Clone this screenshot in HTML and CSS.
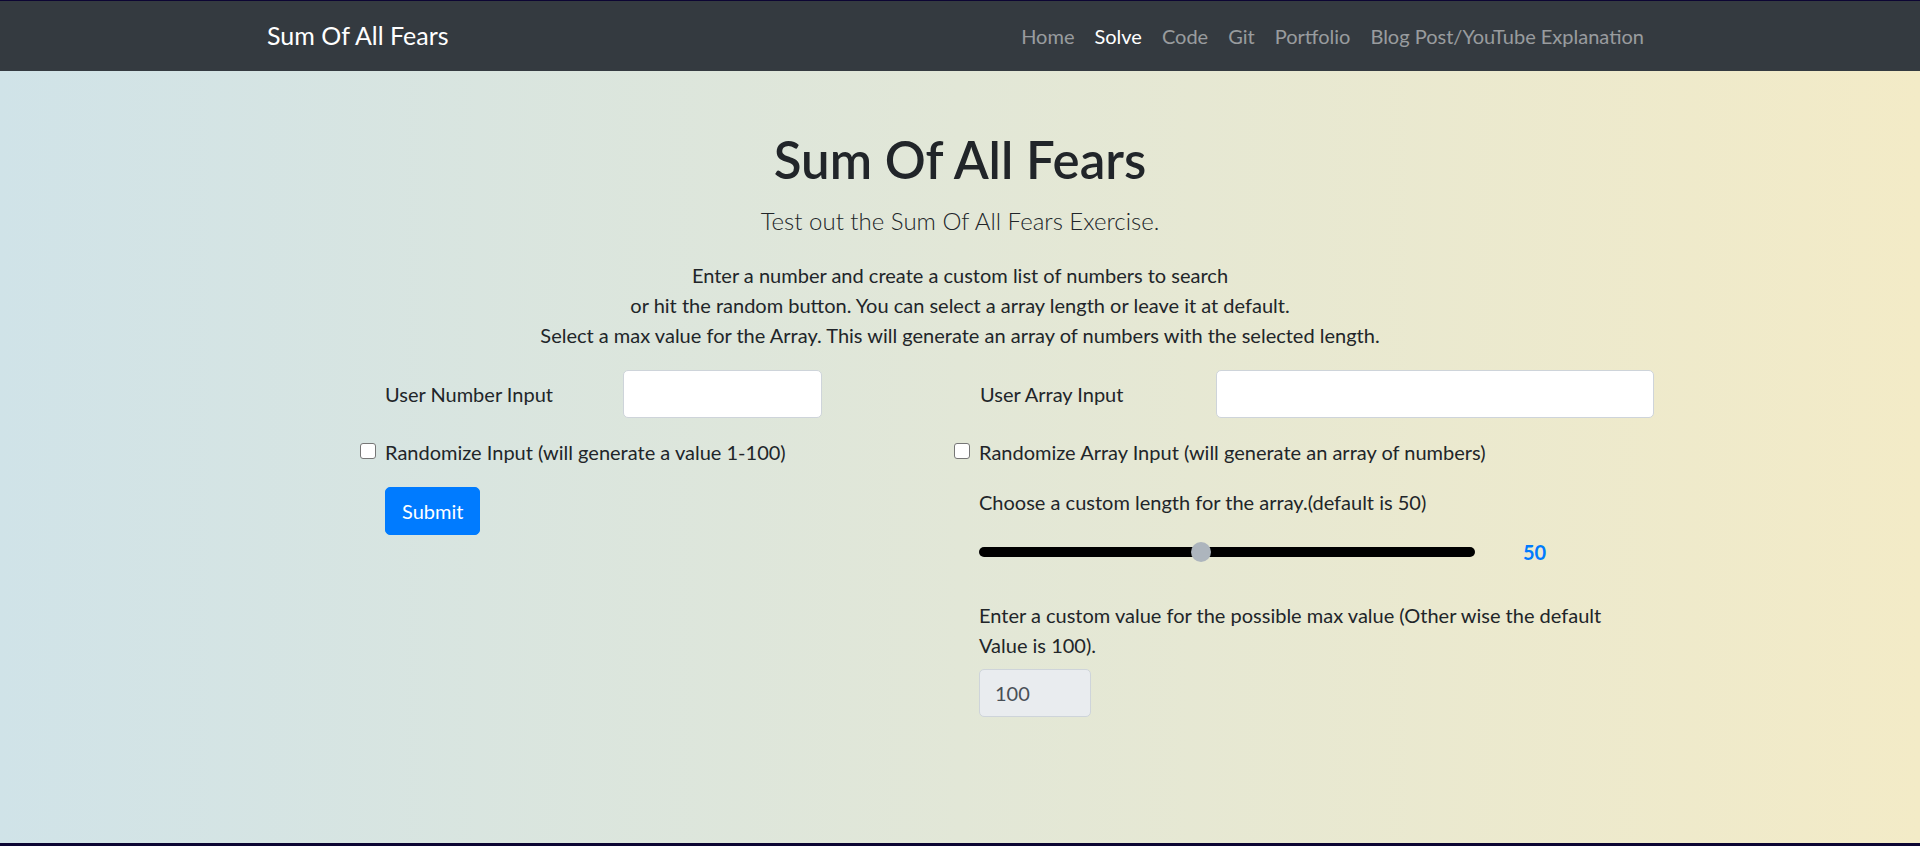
FILE: index.html
```html
<!DOCTYPE html>
<html lang="en">
<head>
<meta charset="utf-8">
<title>Sum Of All Fears</title>
<link rel="stylesheet" href="styles.css">
</head>
<body>
<div class="page">
  <nav class="navbar">
    <div class="nav-inner">
      <a class="brand" href="#">Sum Of All Fears</a>
      <ul class="nav-links">
        <li><a href="#">Home</a></li>
        <li><a class="active" href="#">Solve</a></li>
        <li><a href="#">Code</a></li>
        <li><a href="#">Git</a></li>
        <li><a href="#">Portfolio</a></li>
        <li><a href="#">Blog Post/YouTube Explanation</a></li>
      </ul>
    </div>
  </nav>
  <main class="main">
    <section class="intro">
      <h1 class="title">Sum Of All Fears</h1>
      <p class="lead">Test out the Sum Of All Fears Exercise.</p>
      <p class="desc">Enter a number and create a custom list of numbers to search<br>or hit the random button. You can select a array length or leave it at default.<br>Select a max value for the Array. This will generate an array of numbers with the selected length.</p>
    </section>
    <section class="form-grid">
      <div class="col col-left">
        <div class="field-row">
          <label class="field-label left-label" for="num">User Number Input</label>
          <input class="text-input num-input" id="num" type="text">
        </div>
        <label class="check"><input type="checkbox" class="checkbox"><span>Randomize Input (will generate a value 1-100)</span></label>
        <div class="indent">
          <button class="btn-submit" type="button">Submit</button>
        </div>
      </div>
      <div class="col col-right">
        <div class="field-row">
          <label class="field-label right-label" for="arr">User Array Input</label>
          <input class="text-input arr-input" id="arr" type="text">
        </div>
        <label class="check"><input type="checkbox" class="checkbox"><span>Randomize Array Input (will generate an array of numbers)</span></label>
        <div class="indent">
          <p class="help">Choose a custom length for the array.(default is 50)</p>
          <div class="slider-row">
            <input class="range" type="range" min="1" max="100" value="45">
            <span class="range-value">50</span>
          </div>
          <p class="help max-help">Enter a custom value for the possible max value (Other wise the default Value is 100).</p>
          <input class="text-input max-input" type="text" value="100" readonly>
        </div>
      </div>
    </section>
  </main>
</div>
</body>
</html>
```

FILE: styles.css
```css
* { box-sizing: border-box; }
html, body { margin: 0; padding: 0; }
body {
  background: #0c0533;
  font-family: "Lato", "Liberation Sans", sans-serif;
  font-size: 20px;
  line-height: 1.5;
  color: #212529;
}
.page {
  padding-top: 1px;
  padding-bottom: 3px;
  height: 846px;
  display: flex;
  flex-direction: column;
}
.navbar {
  background: #343a40;
  height: 70px;
  flex: none;
}
.nav-inner {
  height: 100%;
  margin: 0 266px 0 267px;
  display: flex;
  align-items: center;
  justify-content: space-between;
}
.brand {
  color: #fff;
  text-decoration: none;
  font-size: 25px;
}
.nav-links {
  list-style: none;
  margin: 0;
  padding: 0;
  display: flex;
}
.nav-links a {
  display: block;
  padding: 0 10px;
  color: rgba(255,255,255,.5);
  text-decoration: none;
}
.nav-links a.active { color: #fff; }
.main {
  flex: 1;
  background: linear-gradient(to right, #d0e3e8 0%, #e2e7d7 50%, #f3ebc7 100%);
}
.intro { text-align: center; padding-top: 59px; }
.title {
  margin: 0;
  font-size: 51px;
  font-weight: 600;
  line-height: 60px;
}
.lead {
  margin: 12px 0 0;
  font-size: 24px;
  line-height: 37.5px;
  font-weight: 300;
}
.desc { margin: 20px 0 0; }
.form-grid {
  margin: 20px 266px 0 360px;
  display: grid;
  grid-template-columns: 594px 1fr;
}
.field-row {
  display: flex;
  align-items: center;
  height: 48px;
}
.field-label { flex: none; }
.left-label { width: 263px; padding-left: 25px; }
.right-label { width: 262px; padding-left: 26px; }
.text-input {
  height: 48px;
  border: 1px solid #ced4da;
  border-radius: 5px;
  background: #fff;
  font: inherit;
  color: #495057;
  padding: 0 15px;
}
.num-input { width: 199px; }
.arr-input { flex: 1; min-width: 0; }
.check {
  display: flex;
  align-items: center;
  margin-top: 19px;
  height: 30px;
}
.checkbox {
  -webkit-appearance: none;
  appearance: none;
  width: 16px;
  height: 16px;
  margin: 0 9px 0 0;
  border: 1px solid #767676;
  border-radius: 3px;
  background: #fff;
  flex: none;
  position: relative;
  top: -1px;
}
.indent { padding-left: 25px; }
.btn-submit {
  margin-top: 20px;
  height: 48px;
  padding: 0 16px;
  border: 1px solid #007bff;
  border-radius: 5px;
  background: #007bff;
  color: #fff;
  font: inherit;
}
.help { margin: 20px 0 0; }
.slider-row {
  display: flex;
  align-items: center;
  margin-top: 20px;
  height: 30px;
}
.range {
  -webkit-appearance: none;
  appearance: none;
  width: 496px;
  height: 10px;
  margin: 0;
  background: #000;
  border-radius: 5px;
  outline: none;
}
.range::-webkit-slider-thumb {
  -webkit-appearance: none;
  appearance: none;
  width: 20px;
  height: 20px;
  border-radius: 50%;
  background: #adb5bd;
}
.range-value {
  margin-left: 48px;
  color: #007bff;
  font-weight: 700;
}
.max-help { margin-top: 33px; padding-right: 40px; }
.max-input {
  margin-top: 9px;
  width: 112px;
  background: #e9ecef;
}
```
